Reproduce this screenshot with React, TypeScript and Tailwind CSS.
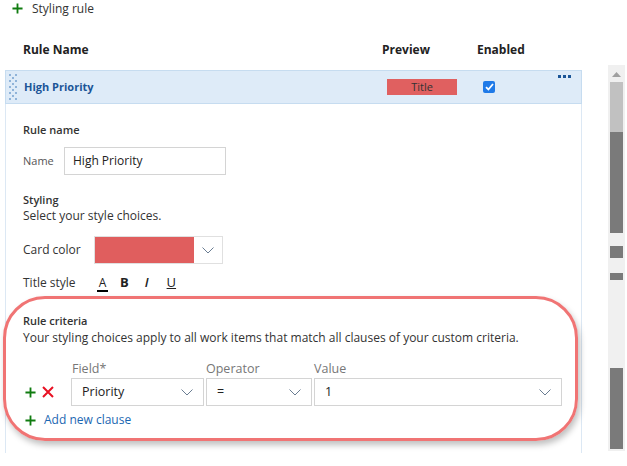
import React from "react";

const font = { fontFamily: '"Open Sans", "Noto Sans", sans-serif' };

function Plus({ size = 12 }: { size?: number }) {
  return (
    <svg width={size} height={size} viewBox="0 0 12 12">
      <path d="M6 0.5V11.5M0.5 6H11.5" stroke="#107c10" strokeWidth="2" />
    </svg>
  );
}

function Cross() {
  return (
    <svg width="12" height="12" viewBox="0 0 12 12">
      <path d="M1 1L11 11M11 1L1 11" stroke="#e81123" strokeWidth="2" />
    </svg>
  );
}

function Chevron() {
  return (
    <svg width="12" height="7" viewBox="0 0 12 7">
      <polyline points="0.5,0.5 6,6 11.5,0.5" fill="none" stroke="#6a7d92" strokeWidth="1" />
    </svg>
  );
}

function DragHandle() {
  const dots: React.ReactNode[] = [];
  for (let r = 0; r < 9; r++) {
    for (let c = 0; c < 3; c++) {
      if ((r + c) % 2 === 0) {
        dots.push(<rect key={`${r}-${c}`} x={c * 3} y={r * 3} width="2" height="2" fill="#8fb3d9" />);
      }
    }
  }
  return (
    <svg width="8" height="27" viewBox="0 0 8 27">
      {dots}
    </svg>
  );
}

function Select({ w, value }: { w: string; value: string }) {
  return (
    <div className={`${w} shrink-0 h-[28px] border border-[#d4d4d4] bg-white flex items-center pl-[10px] pr-[10px] justify-between`}>
      <span className="text-[12.5px] text-[#222]">{value}</span>
      <Chevron />
    </div>
  );
}

export default function App() {
  return (
    <div className="w-[627px] h-[466px] bg-white overflow-hidden flex relative text-[#333]" style={font}>
      <div className="w-[582px] shrink-0 flex flex-col">
        <div className="h-[17px] flex items-center pl-[12px] gap-[9px]">
          <Plus size={11} />
          <span className="text-[12px] text-[#333]">Styling rule</span>
        </div>
        <div className="h-[20px] mt-[23px] flex items-center text-[12px] font-bold text-[#222]">
          <span className="pl-[23px] w-[382px]">Rule Name</span>
          <span className="w-[95px]">Preview</span>
          <span>Enabled</span>
        </div>
        <div className="ml-[5px] mt-[10px] h-[34px] border border-[#c6dcf0] bg-[#deebf8] flex items-center relative">
          <div className="ml-[3px] w-[15px]">
            <DragHandle />
          </div>
          <span className="w-[363px] text-[11px] font-bold text-[#1b5597]">High Priority</span>
          <div className="w-[70px] h-[16px] bg-[#e06060] flex items-center justify-center text-[11px] text-[#333]">Title</div>
          <div className="ml-[26px] w-[12px] h-[12px] rounded-[2px] bg-[#1f7ae8] flex items-center justify-center">
            <svg width="9" height="8" viewBox="0 0 9 8">
              <polyline points="1,4.2 3.4,6.5 8,1" fill="none" stroke="white" strokeWidth="1.8" />
            </svg>
          </div>
          <div className="absolute right-[10px] top-[4px] flex gap-[2px]">
            <span className="w-[3px] h-[3px] bg-[#1b5597]" />
            <span className="w-[3px] h-[3px] bg-[#1b5597]" />
            <span className="w-[3px] h-[3px] bg-[#1b5597]" />
          </div>
        </div>
        <div className="ml-[5px] flex-1 border-l border-r border-[#dce8f4] mb-[13px] pl-[17px] flex flex-col">
          <div className="mt-[18px] h-[16px] flex items-center text-[11px] font-semibold text-[#333]">Rule name</div>
          <div className="mt-[9px] flex items-center h-[28px]">
            <span className="w-[41px] text-[11px] text-[#555]">Name</span>
            <div className="w-[162px] h-[28px] border border-[#d4d4d4] flex items-center pl-[8px] text-[12px] text-[#222]">High Priority</div>
          </div>
          <div className="mt-[17px] h-[16px] flex items-center text-[11px] font-semibold text-[#333]">Styling</div>
          <div className="h-[16px] flex items-center text-[12px] text-[#333]">Select your style choices.</div>
          <div className="mt-[12px] flex items-center h-[28px]">
            <span className="w-[71px] text-[12px] text-[#333]">Card color</span>
            <div className="flex h-[28px] border border-[#e0e0e0]">
              <div className="w-[99px] h-full bg-[#e05e5e]" />
              <div className="w-[28px] h-full flex items-center justify-center">
                <Chevron />
              </div>
            </div>
          </div>
          <div className="mt-[9px] flex items-center h-[20px]">
            <span className="w-[74px] text-[12px] text-[#333]">Title style</span>
            <div className="flex items-center text-[13px] text-[#222]">
              <span className="relative w-[11px] text-center text-[12px] leading-none">
                A
                <span className="absolute left-0 right-0 -bottom-[3px] h-[2px] bg-black" />
              </span>
              <span className="ml-[12px] font-bold">B</span>
              <span className="ml-[16px] italic font-semibold">I</span>
              <span className="ml-[18px] underline">U</span>
            </div>
          </div>
          <div className="mt-[20px] h-[16px] flex items-center text-[11px] font-semibold text-[#333]">Rule criteria</div>
          <div className="h-[17px] flex items-center text-[12px] text-[#333]">
            Your styling choices apply to all work items that match all clauses of your custom criteria.
          </div>
          <div className="mt-[15px] h-[16px] flex items-center text-[12.5px] text-[#777]">
            <span className="ml-[49px] w-[134px]">Field*</span>
            <span className="w-[108px]">Operator</span>
            <span>Value</span>
          </div>
          <div className="mt-[1px] flex items-center h-[28px]">
            <div className="w-[48px] shrink-0 flex items-center gap-[6px] pl-[2px]">
              <Plus size={11} />
              <Cross />
            </div>
            <Select w="w-[133px]" value="Priority" />
            <div className="w-[2px] shrink-0" />
            <Select w="w-[106px]" value="=" />
            <div className="w-[2px] shrink-0" />
            <Select w="w-[248px]" value="1" />
          </div>
          <div className="mt-[6px] h-[16px] flex items-center gap-[8px] pl-[2px]">
            <Plus size={11} />
            <span className="text-[12px] text-[#1b67b2]">Add new clause</span>
          </div>
        </div>
      </div>
      <div className="ml-[26px] mt-[65px] w-[17px] h-[386px] bg-[#f0f0f0] flex flex-col items-center">
        <svg className="mt-[7px]" width="9" height="5" viewBox="0 0 9 5">
          <polygon points="0,5 4.5,0 9,5" fill="#a0a0a0" />
        </svg>
        <div className="mt-[5px] w-[13px] h-[50px] bg-[#c1c1c1]" />
        <div className="w-[13px] h-[101px] bg-[#7a7a7a]" />
        <div className="mt-[13px] w-[13px] h-[12px] bg-[#7a7a7a]" />
        <div className="mt-[15px] w-[13px] h-[7px] bg-[#7a7a7a]" />
        <div className="mt-[88px] w-[13px] h-[81px] bg-[#7a7a7a]" />
      </div>
      <div
        className="absolute left-[3px] top-[296px] w-[575px] h-[145px] rounded-[42px] border-[3px] border-[#f07474] pointer-events-none"
        style={{ boxShadow: "2px 4px 6px rgba(0,0,0,0.25)" }}
      />
    </div>
  );
}
